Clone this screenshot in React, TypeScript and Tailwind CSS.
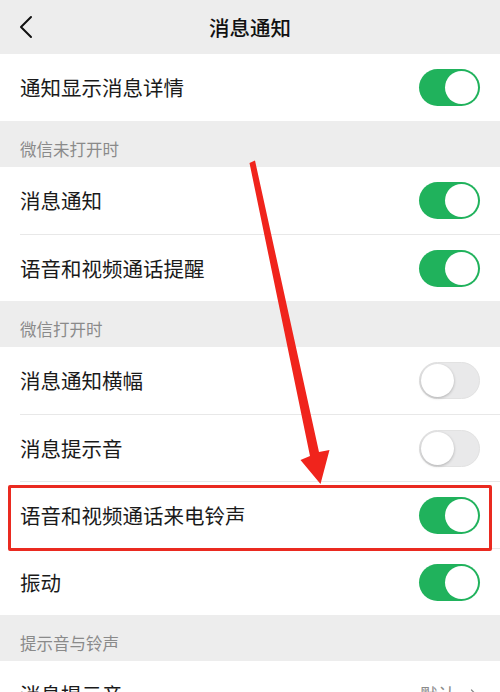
import { ChevronRight } from 'lucide-react';

const font = { fontFamily: '"Noto Sans CJK SC", "Noto Sans", sans-serif' };

function Toggle({ on }: { on: boolean }) {
  if (on) {
    return (
      <div className="w-[61px] h-[37px] rounded-full bg-[#20b25c] relative shrink-0">
        <div className="absolute right-[2px] top-[2px] w-[33px] h-[33px] rounded-full bg-white"></div>
      </div>
    );
  }
  return (
    <div className="w-[61px] h-[37px] rounded-full bg-[#e9e9ea] border border-[#e2e2e2] relative shrink-0">
      <div className="absolute left-[1px] top-[1px] w-[33px] h-[33px] rounded-full bg-white shadow-[0_1px_3px_rgba(0,0,0,0.25)]"></div>
    </div>
  );
}

function Row({ label, on, first }: { label: string; on: boolean; first?: boolean }) {
  return (
    <div className="bg-white pl-5">
      <div
        className={
          'h-[67px] flex items-center justify-between pr-5 ' +
          (first ? '' : 'border-t border-[#e8e8e8]')
        }
      >
        <span className="text-[20.5px] text-[#1a1a1a]">{label}</span>
        <Toggle on={on} />
      </div>
    </div>
  );
}

function Header({ title }: { title: string }) {
  return (
    <div className="h-[46px] flex items-end pl-5 pb-[6px]">
      <span className="text-[16.5px] leading-6 text-[#8a8a8a]">{title}</span>
    </div>
  );
}

export default function App() {
  return (
    <div className="w-[500px] h-[692px] overflow-hidden bg-[#ededed] relative" style={font}>
      {/* nav bar */}
      <div className="h-[54px] flex items-center justify-center relative">
        <svg className="absolute left-[14px] top-[12px]" width="24" height="30" viewBox="0 0 24 30">
          <path d="M17 5 L7 15 L17 25" fill="none" stroke="#111" strokeWidth="2" strokeLinecap="round" strokeLinejoin="round" />
        </svg>
        <span className="text-[20.5px] font-medium text-[#111]">消息通知</span>
      </div>

      <Row label="通知显示消息详情" on first />

      <Header title="微信未打开时" />
      <Row label="消息通知" on first />
      <Row label="语音和视频通话提醒" on />

      <Header title="微信打开时" />
      <Row label="消息通知横幅" on={false} first />
      <Row label="消息提示音" on={false} />
      <Row label="语音和视频通话来电铃声" on />
      <Row label="振动" on />

      <Header title="提示音与铃声" />
      <div className="bg-white pl-5">
        <div className="h-[67px] flex items-center justify-between pr-4">
          <span className="text-[20.5px] text-[#1a1a1a]">消息提示音</span>
          <div className="flex items-center gap-2 text-[#8a8a8a]">
            <span className="text-[18px]">默认</span>
            <ChevronRight className="w-5 h-5" strokeWidth={1.5} />
          </div>
        </div>
      </div>

      {/* annotation: red box */}
      <div className="absolute left-[8px] top-[485px] w-[484px] h-[66px] border-[3px] border-[#ea2a20] rounded-[2px]"></div>

      {/* annotation: red arrow */}
      <svg className="absolute left-0 top-0" width="500" height="692" viewBox="0 0 500 692">
        <polygon
          points="249.5,163 255,160.5 319,452 329.5,450 320.5,484 300.5,460 310,456"
          fill="#f0241c"
          strokeLinejoin="round"
        />
      </svg>
    </div>
  );
}
